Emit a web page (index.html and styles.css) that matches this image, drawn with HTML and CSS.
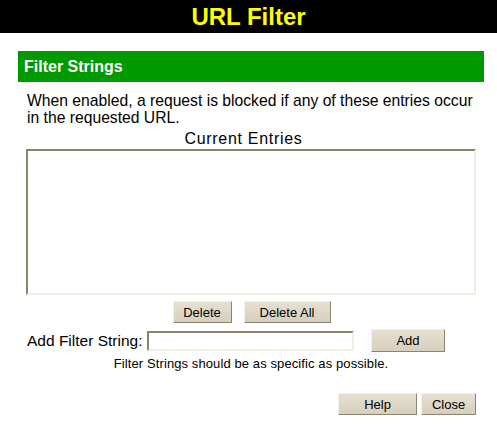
FILE: index.html
```html
<!DOCTYPE html>
<html>
<head>
<meta charset="utf-8">
<title>URL Filter</title>
<link rel="stylesheet" href="styles.css">
</head>
<body>
<div class="header"><h1 class="title">URL Filter</h1></div>
<div class="content">
  <div class="section-bar">Filter Strings</div>
  <p class="intro">When enabled, a request is blocked if any of these entries occur in the requested URL.</p>
  <div class="list-caption">Current Entries</div>
  <div class="listbox"></div>
  <div class="btn-row center">
    <button class="btn btn-delete">Delete</button>
    <button class="btn btn-delete-all">Delete All</button>
  </div>
  <div class="add-row">
    <label class="add-label">Add Filter String:</label>
    <input class="text-input" type="text">
    <button class="btn btn-add">Add</button>
  </div>
  <div class="note">Filter Strings should be as specific as possible.</div>
  <div class="btn-row right">
    <button class="btn btn-help">Help</button>
    <button class="btn btn-close">Close</button>
  </div>
</div>
</body>
</html>
```
FILE: styles.css
```css
html, body {
  margin: 0;
  padding: 0;
  background: #ffffff;
  font-family: "Liberation Sans", Arial, sans-serif;
  color: #000;
}
.header {
  background: #000;
  height: 33px;
  display: flex;
  align-items: center;
  justify-content: center;
}
.title {
  margin: 0;
  color: #ffff00;
  font-size: 24px;
  font-weight: bold;
  line-height: 33px;
}
.content {
  margin: 18px 13px 0 18px;
}
.section-bar {
  background: #009900;
  color: #fff;
  font-weight: bold;
  font-size: 16px;
  height: 31px;
  line-height: 31px;
  padding-left: 6px;
}
.intro {
  margin: 10px 0 0 0;
  padding: 0 0 0 9px;
  font-size: 15.7px;
  line-height: 17px;
}
.list-caption {
  margin-top: 4px;
  font-size: 16px;
  letter-spacing: 0.7px;
  line-height: 17px;
  text-align: center;
  padding-right: 15px;
}
.listbox {
  margin: 2px 0 0 8px;
  width: 446px;
  height: 142px;
  border-style: solid;
  border-width: 2px;
  border-color: #8b8468 #f1efe2 #f1efe2 #8b8468;
  background: #fff;
}
.btn-row {
  display: flex;
  gap: 12px;
}
.btn-row.center {
  justify-content: center;
  margin-top: 6px;
  padding-left: 1px;
}
.btn-row.right {
  justify-content: flex-end;
  gap: 4px;
  margin-top: 22px;
  margin-right: 8px;
}
.btn {
  font-family: "Liberation Sans", Arial, sans-serif;
  font-size: 13px;
  color: #000;
  height: 22px;
  padding: 0;
  border-style: solid;
  border-width: 1px;
  border-color: #f4f1e6 #8c8570 #8c8570 #f4f1e6;
  background: linear-gradient(#e6e0d2, #d6cfbd);
}
.btn-delete { width: 59px; }
.btn-delete-all { width: 87px; }
.btn-add { width: 74px; height: 23px; margin-left: 17px; }
.btn-help { width: 79px; }
.btn-close { width: 55px; }
.add-row {
  display: flex;
  align-items: center;
  margin-top: 6px;
  padding-left: 9px;
}
.add-label {
  font-size: 15.5px;
  width: 120px;
}
.text-input {
  box-sizing: border-box;
  width: 207px;
  height: 20px;
  margin: 0;
  border-style: solid;
  border-width: 2px;
  border-color: #8b8468 #f1efe2 #f1efe2 #8b8468;
  background: #fff;
}
.note {
  margin-top: 4px;
  font-size: 13px;
  letter-spacing: 0.1px;
  line-height: 15px;
  text-align: center;
}
```
